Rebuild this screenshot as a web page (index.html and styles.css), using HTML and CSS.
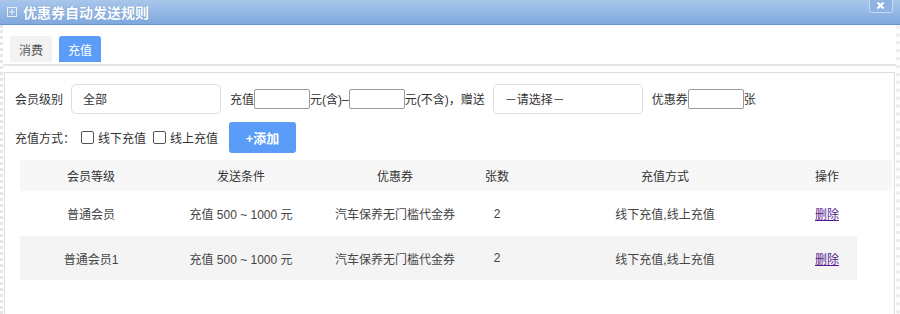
FILE: index.html
```html
<!DOCTYPE html>
<html lang="zh-CN">
<head>
  <meta charset="UTF-8">
  <meta name="viewport" content="width=device-width, initial-scale=1.0">
  <title>优惠券自动发送规则</title>
  <link rel="stylesheet" href="styles.css">
</head>
<body>
  <div class="dialog">
    <div class="titlebar">
      <span class="title-icon">
        <svg width="10" height="10" viewBox="0 0 10 10">
          <rect x="0.5" y="0.5" width="9" height="9" fill="none" stroke="#e8eef8" stroke-width="1"/>
          <path d="M5 2v6M2 5h6" stroke="#e8eef8" stroke-width="1"/>
        </svg>
      </span>
      <span class="title">优惠券自动发送规则</span>
      <span class="close">
        <svg width="24" height="13" viewBox="0 0 24 13">
          <rect x="0.5" y="-2" width="23" height="14.5" rx="2" fill="#8fb2e2" stroke="#c9dbf3"/>
          <path d="M8.5 2.5l6 6M14.5 2.5l-6 6" stroke="#fff" stroke-width="2.2"/>
        </svg>
      </span>
    </div>

    <div class="dialog-body">
      <div class="tabs">
        <span class="tab">消费</span>
        <span class="tab active">充值</span>
      </div>

      <div class="panel">
        <div class="form-row">
          <span class="label">会员级别</span>
          <span class="field wide">全部</span>
          <span class="label gap">充值</span><input class="small" type="text"><span>元(含)–</span><input class="small" type="text"><span>元(不含)，赠送</span>
          <span class="field wide select">－请选择－</span>
          <span class="label gap">优惠券</span><input class="small" type="text"><span>张</span>
        </div>

        <div class="form-row second">
          <span class="label">充值方式：</span>
          <label class="check"><span class="box"></span>线下充值</label>
          <label class="check"><span class="box"></span>线上充值</label>
          <button class="btn-add">+添加</button>
        </div>

        <div class="table">
          <div class="row head">
            <div class="cell c1">会员等级</div>
            <div class="cell c2">发送条件</div>
            <div class="cell c3">优惠券</div>
            <div class="cell c4">张数</div>
            <div class="cell c5">充值方式</div>
            <div class="cell c6">操作</div>
          </div>
          <div class="row">
            <div class="cell c1">普通会员</div>
            <div class="cell c2">充值 500 ~ 1000 元</div>
            <div class="cell c3">汽车保养无门槛代金券</div>
            <div class="cell c4">2</div>
            <div class="cell c5">线下充值,线上充值</div>
            <div class="cell c6"><a href="#">删除</a></div>
          </div>
          <div class="row alt">
            <div class="cell c1">普通会员1</div>
            <div class="cell c2">充值 500 ~ 1000 元</div>
            <div class="cell c3">汽车保养无门槛代金券</div>
            <div class="cell c4">2</div>
            <div class="cell c5">线下充值,线上充值</div>
            <div class="cell c6"><a href="#">删除</a></div>
          </div>
        </div>
      </div>
    </div>
  </div>
</body>
</html>
```

FILE: styles.css
```css
body {
  margin: 0;
  font-family: "Liberation Sans", "Noto Sans CJK SC", sans-serif;
  font-size: 12px;
  color: #333;
  background: #fff;
}

.dialog {
  width: 900px;
  height: 314px;
  overflow: hidden;
}

.titlebar {
  height: 24px;
  display: flex;
  align-items: center;
  background: linear-gradient(#a9c7eb, #80a8dd);
  border-bottom: 1px solid #6592d2;
  position: relative;
}

.title-icon {
  display: flex;
  margin-left: 7px;
  margin-right: 6px;
}

.title {
  color: #fff;
  font-size: 14px;
  font-weight: bold;
  text-shadow: 0 0 1px #5c86c0;
}

.close {
  position: absolute;
  top: 0;
  right: 7px;
  display: flex;
}

.dialog-body {
  height: 289px;
  padding-top: 11px;
  border-left: 3px dotted #e6e6e6;
  border-right: 4px dotted #ececec;
  box-sizing: border-box;
}

.tabs {
  display: flex;
  gap: 7px;
  padding-left: 7px;
  padding-bottom: 2px;
  border-bottom: 2px solid #e6e6e6;
}

.tab {
  width: 42px;
  height: 26px;
  display: flex;
  align-items: center;
  justify-content: center;
  background: #f2f2f2;
  color: #555;
  border-radius: 3px 3px 0 0;
}

.tab.active {
  background: #5a9cf8;
  color: #fff;
}

.panel {
  margin-top: 6px;
  margin-left: 1px;
  width: 891px;
  height: 260px;
  border: 1px solid #dcdcdc;
  box-sizing: border-box;
  padding-top: 10px;
}

.form-row {
  display: flex;
  align-items: center;
  padding-left: 10px;
  height: 31px;
}

.form-row.second {
  margin-top: 8px;
}

.label {
  margin-right: 8px;
}

.label.gap {
  margin-left: 9px;
  margin-right: 0;
}

.field {
  height: 30px;
  box-sizing: border-box;
  border: 1px solid #dedede;
  border-radius: 5px;
  display: flex;
  align-items: center;
  padding-left: 11px;
}

.field.wide {
  width: 150px;
}

.field.select {
  margin-left: 8px;
}

input.small {
  width: 56px;
  height: 20px;
  box-sizing: border-box;
  border: 1px solid #999;
  border-radius: 2px;
  padding: 0;
  margin: 0;
}

.check {
  display: flex;
  align-items: center;
  margin-left: -2px;
  margin-right: 9px;
}

.check + .check {
  margin-left: -2px;
}

.box {
  width: 11px;
  height: 11px;
  border: 1px solid #555;
  border-radius: 2px;
  margin-right: 4px;
}

.btn-add {
  margin-left: 2px;
  width: 67px;
  height: 31px;
  border: none;
  border-radius: 3px;
  background: #5a9cf8;
  color: #fff;
  font-family: inherit;
  font-size: 13px;
  font-weight: bold;
}

.table {
  margin-top: 7px;
  margin-left: 15px;
}

.row {
  display: flex;
  width: 837px;
  height: 45px;
  align-items: center;
  color: #444;
}

.row.head {
  width: 872px;
  height: 31px;
  background: #f7f7f7;
  color: #333;
}

.row.alt {
  height: 44px;
  background: #f4f4f4;
}

.cell {
  text-align: center;
  flex: none;
}

.c1 { width: 142px; }
.c2 { width: 158px; }
.c3 { width: 150px; }
.c4 { width: 54px; }
.c5 { width: 282px; }
.c6 { width: 42px; }

.cell a {
  color: #551a8b;
}
```
